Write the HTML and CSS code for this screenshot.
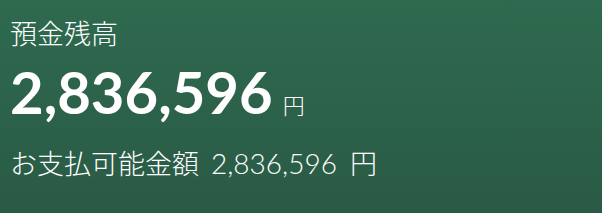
FILE: index.html
```html
<!DOCTYPE html>
<html lang="ja">
<head>
    <meta charset="UTF-8">
    <meta name="viewport" content="width=device-width, initial-scale=1.0">
    <title>預金残高</title>
    <link rel="stylesheet" href="styles.css">
</head>
<body>
    <div class="balance-card">
        <p class="label">預金残高</p>
        <p class="balance">
            <span class="amount">2,836,596</span>
            <span class="unit">円</span>
        </p>
        <p class="available">お支払可能金額<span class="num">2,836,596</span>円</p>
    </div>
</body>
</html>
```

FILE: styles.css
```css
* {
    padding: 0;
    margin: 0;
    box-sizing: border-box;
}

body {
    width: 602px;
    height: 213px;
    overflow: hidden;
    font-family: "Noto Sans CJK JP", sans-serif;
}

.balance-card {
    height: 213px;
    padding: 17px 10px 0;
    color: #fff;
    background: linear-gradient(180deg, #2e6a4f 0%, #2a5a45 100%);
}

.label {
    font-size: 27px;
    line-height: 32px;
    font-weight: 300;
}

.balance {
    margin-top: 15px;
    display: flex;
    align-items: baseline;
    gap: 10px;
    height: 56px;
}

.balance .amount {
    font-family: Lato, sans-serif;
    font-weight: 700;
    font-size: 58px;
    line-height: 56px;
}

.balance .unit {
    font-size: 22px;
    font-weight: 300;
}

.available {
    margin-top: 27px;
    font-size: 27px;
    line-height: 32px;
    font-weight: 300;
}

.available .num {
    margin: 0 13px 0 12px;
    font-family: Lato, sans-serif;
    font-weight: 300;
    font-size: 28px;
}
```
